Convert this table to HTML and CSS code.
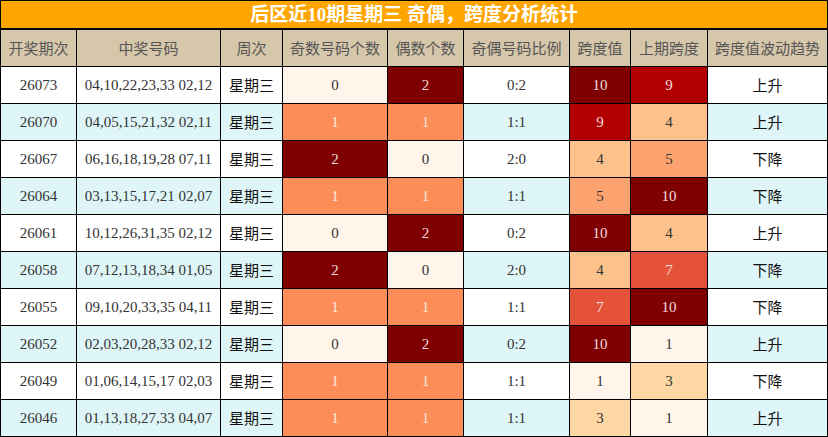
FILE: index.html
```html
<!DOCTYPE html>
<html lang="zh">
<head>
<meta charset="utf-8">
<title>后区近10期星期三 奇偶，跨度分析统计</title>
<link rel="stylesheet" href="styles.css">
</head>
<body>
<table class="stats">
  <colgroup>
    <col class="c-issue"><col class="c-nums"><col class="c-week"><col class="c-odd"><col class="c-even"><col class="c-ratio"><col class="c-span"><col class="c-prev"><col class="c-trend">
  </colgroup>
  <thead>
    <tr class="title-row"><th colspan="9" class="title">后区近10期星期三 奇偶，跨度分析统计</th></tr>
    <tr class="head-row">
      <th>开奖期次</th><th>中奖号码</th><th>周次</th><th>奇数号码个数</th><th>偶数个数</th><th>奇偶号码比例</th><th>跨度值</th><th>上期跨度</th><th>跨度值波动趋势</th>
    </tr>
  </thead>
  <tbody>
    <tr><td>26073</td><td>04,10,22,23,33 02,12</td><td class="wk">星期三</td><td class="h0">0</td><td class="h2">2</td><td>0:2</td><td class="s10">10</td><td class="s9">9</td><td class="tr">上升</td></tr>
    <tr class="alt"><td>26070</td><td>04,05,15,21,32 02,11</td><td class="wk">星期三</td><td class="h1">1</td><td class="h1">1</td><td>1:1</td><td class="s9">9</td><td class="s4">4</td><td class="tr">上升</td></tr>
    <tr><td>26067</td><td>06,16,18,19,28 07,11</td><td class="wk">星期三</td><td class="h2">2</td><td class="h0">0</td><td>2:0</td><td class="s4">4</td><td class="s5">5</td><td class="tr">下降</td></tr>
    <tr class="alt"><td>26064</td><td>03,13,15,17,21 02,07</td><td class="wk">星期三</td><td class="h1">1</td><td class="h1">1</td><td>1:1</td><td class="s5">5</td><td class="s10">10</td><td class="tr">下降</td></tr>
    <tr><td>26061</td><td>10,12,26,31,35 02,12</td><td class="wk">星期三</td><td class="h0">0</td><td class="h2">2</td><td>0:2</td><td class="s10">10</td><td class="s4">4</td><td class="tr">上升</td></tr>
    <tr class="alt"><td>26058</td><td>07,12,13,18,34 01,05</td><td class="wk">星期三</td><td class="h2">2</td><td class="h0">0</td><td>2:0</td><td class="s4">4</td><td class="s7">7</td><td class="tr">下降</td></tr>
    <tr><td>26055</td><td>09,10,20,33,35 04,11</td><td class="wk">星期三</td><td class="h1">1</td><td class="h1">1</td><td>1:1</td><td class="s7">7</td><td class="s10">10</td><td class="tr">下降</td></tr>
    <tr class="alt"><td>26052</td><td>02,03,20,28,33 02,12</td><td class="wk">星期三</td><td class="h0">0</td><td class="h2">2</td><td>0:2</td><td class="s10">10</td><td class="s1">1</td><td class="tr">上升</td></tr>
    <tr><td>26049</td><td>01,06,14,15,17 02,03</td><td class="wk">星期三</td><td class="h1">1</td><td class="h1">1</td><td>1:1</td><td class="s1">1</td><td class="s3">3</td><td class="tr">下降</td></tr>
    <tr class="alt"><td>26046</td><td>01,13,18,27,33 04,07</td><td class="wk">星期三</td><td class="h1">1</td><td class="h1">1</td><td>1:1</td><td class="s3">3</td><td class="s1">1</td><td class="tr">上升</td></tr>
  </tbody>
</table>
</body>
</html>
```
FILE: styles.css
```css
html, body {
  margin: 0;
  padding: 0;
  background: #ffffff;
}

.stats {
  border-collapse: collapse;
  table-layout: fixed;
  width: 828px;
  font-family: "Liberation Serif", "Noto Sans CJK SC", serif;
  font-size: 15px;
  color: #333333;
}

.c-issue { width: 76px; }
.c-nums { width: 144px; }
.c-week { width: 62px; }
.c-odd { width: 105px; }
.c-even { width: 76px; }
.c-ratio { width: 106px; }
.c-span { width: 61px; }
.c-prev { width: 77px; }
.c-trend { width: 120px; }

.stats th,
.stats td {
  border: 1px solid #000000;
  padding: 0;
  text-align: center;
  vertical-align: middle;
  line-height: 18px;
  white-space: nowrap;
  overflow: hidden;
}

.title-row th {
  height: 27px;
  background: #ffa500;
  color: #ffffff;
  font-weight: bold;
  font-size: 19px;
  border-bottom: 2px solid #000000;
  line-height: 22px;
}

.head-row th {
  height: 36px;
  background: #d6c6aa;
  color: #555555;
  font-weight: normal;
  font-family: "Noto Sans CJK SC", sans-serif;
  font-size: 15px;
}

.stats tbody td {
  height: 36px;
}

.stats tbody tr.alt td {
  background: #dff6f8;
}

.stats td.wk,
.stats td.tr {
  font-family: "Noto Sans CJK SC", sans-serif;
  color: #111111;
}

/* heat cells for odd / even counts */
.stats tbody tr td.h0 { background: #fff5ea; color: #333333; }
.stats tbody tr td.h1 { background: #fc8d59; color: #fbe9dc; }
.stats tbody tr td.h2 { background: #7f0000; color: #f0dcdc; }

/* heat cells for span values */
.stats tbody tr td.s1 { background: #fff5ea; color: #333333; }
.stats tbody tr td.s3 { background: #fdd7a4; color: #333333; }
.stats tbody tr td.s4 { background: #fdc28c; color: #333333; }
.stats tbody tr td.s5 { background: #fca36f; color: #333333; }
.stats tbody tr td.s7 { background: #e4523a; color: #f7e3dd; }
.stats tbody tr td.s9 { background: #b00000; color: #f3dada; }
.stats tbody tr td.s10 { background: #7f0000; color: #f0dcdc; }
```
